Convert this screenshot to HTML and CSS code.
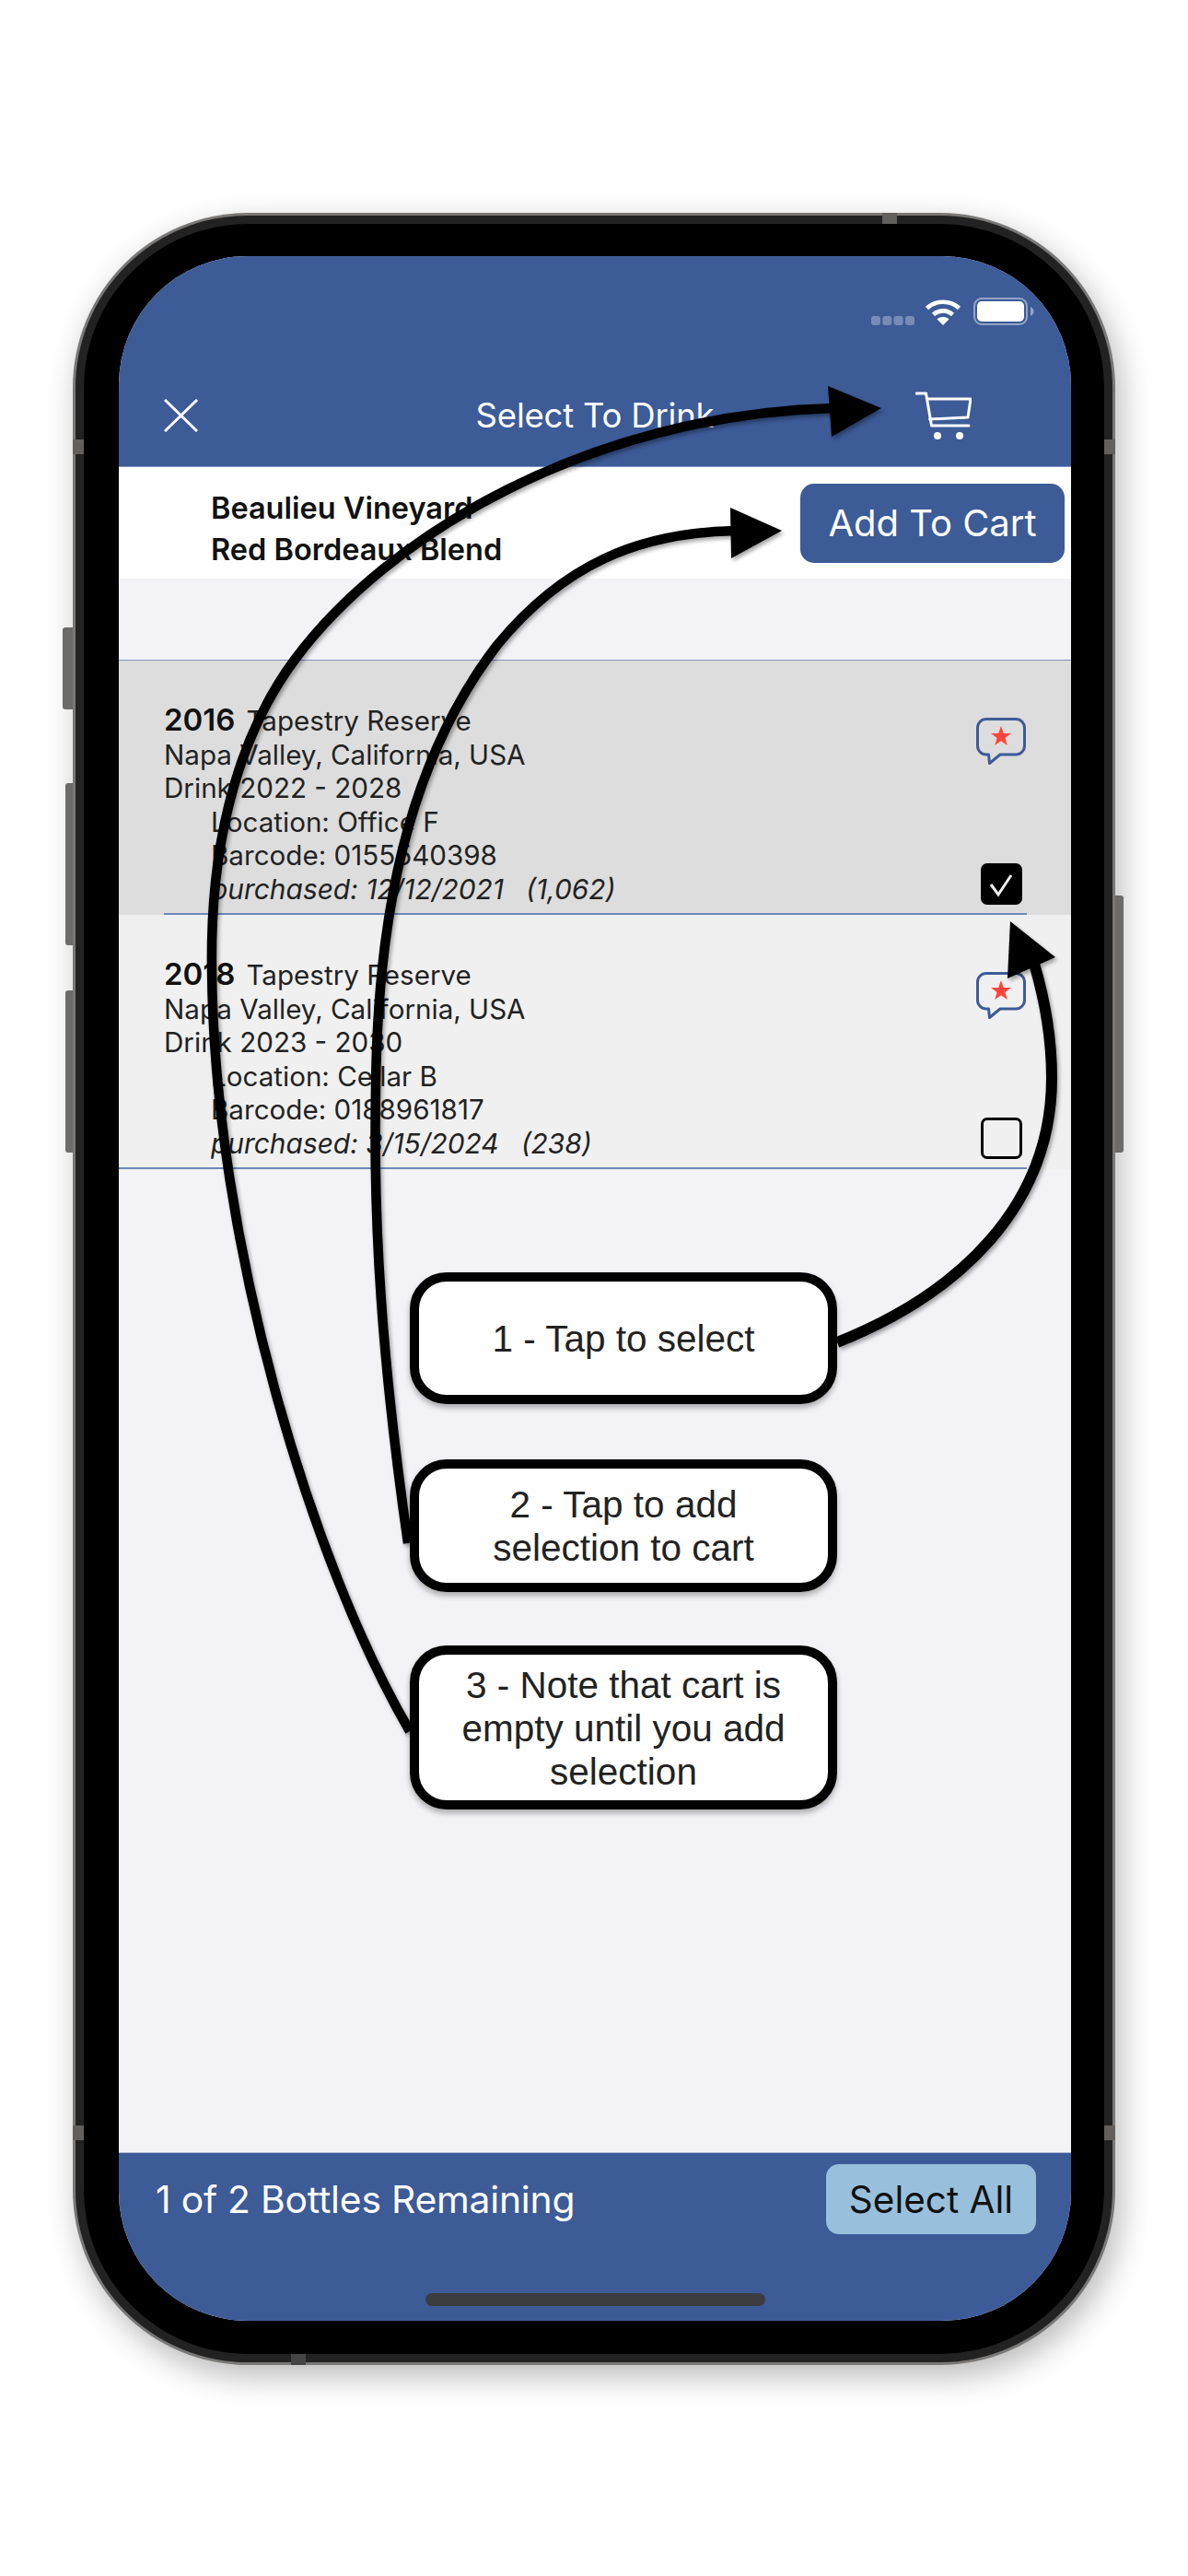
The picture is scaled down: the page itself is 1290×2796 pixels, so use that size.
FILE: index.html
```html
<!DOCTYPE html>
<html lang="en">
<head>
<meta charset="utf-8">
<title>Select To Drink</title>
<link rel="stylesheet" href="styles.css">
</head>
<body>
<div class="page">
  <div class="phone">
    <span class="hw hw-mute"></span>
    <span class="hw hw-volup"></span>
    <span class="hw hw-voldown"></span>
    <span class="hw hw-power"></span>
    <span class="band band-l1"></span>
    <span class="band band-r1"></span>
    <span class="band band-l2"></span>
    <span class="band band-r2"></span>
    <span class="band band-t"></span>
    <span class="band band-b"></span>
    <div class="ring">
      <div class="bezel">
        <div class="screen">
          <header class="header">
            <div class="status">
              <svg class="dots" width="47" height="10" viewBox="0 0 47 10"><g fill="#fff" fill-opacity=".3"><rect width="10" height="10" rx="3"/><rect x="12.3" width="10" height="10" rx="3"/><rect x="24.6" width="10" height="10" rx="3"/><rect x="37" width="10" height="10" rx="3"/></g></svg>
              <svg class="wifi" width="40" height="30" viewBox="0 0 40 30"><g fill="none" stroke="#fff" stroke-width="4.6"><path d="M2.5 11.5C12 2.5 28 2.5 37.500 11.500"/><path d="M9.500 18.500C15.500 13 24.500 13 30.500 18.500"/></g><path fill="#fff" d="M20 30l-6.500-6.500c3.800-3.200 9.200-3.200 13 0z"/></svg>
              <svg class="battery" width="66" height="30" viewBox="0 0 66 30"><rect x="1" y="1" width="57" height="28" rx="8" fill="none" stroke="#fff" stroke-opacity=".45" stroke-width="2"/><rect x="4" y="4" width="51" height="22" rx="5" fill="#fff"/><path d="M62 10c2.500 1 3.500 3 3.500 5s-1 4-3.500 5z" fill="#fff" fill-opacity=".45"/></svg>
            </div>
            <div class="nav">
              <svg class="close" width="37" height="36" viewBox="0 0 37 36"><path d="M1 1l35 34M36 1L1 35" stroke="#fff" stroke-width="3" fill="none"/></svg>
              <div class="title">Select To Drink</div>
              <svg class="cart" width="61" height="52" viewBox="0 0 61 52"><g fill="none" stroke="#fff" stroke-width="3" stroke-linecap="round" stroke-linejoin="round"><path d="M1 2h10.500l6 35H58"/><path d="M12.500 8H60l-3 20-41.500 2"/></g><circle cx="24" cy="48" r="4" fill="#fff"/><circle cx="48" cy="48" r="4" fill="#fff"/></svg>
            </div>
          </header>

          <section class="wine-bar">
            <div class="wine-name">
              <div>Beaulieu Vineyard</div>
              <div>Red Bordeaux Blend</div>
            </div>
            <button class="add-btn">Add To Cart</button>
          </section>

          <main class="content">
            <div class="list">
              <article class="row row-selected">
                <div class="row-inner">
                  <div class="info">
                    <div><b class="year">2016</b><span class="vname">Tapestry Reserve</span></div>
                    <div>Napa Valley, California, USA</div>
                    <div>Drink 2022 - 2028</div>
                    <div class="indent">Location: Office F</div>
                    <div class="indent">Barcode: 0155540398</div>
                    <div class="indent purchased">purchased: 12/12/2021<span class="days">(1,062)</span></div>
                  </div>
                  <div class="side">
                    <svg class="note" width="54" height="52" viewBox="0 0 54 52"><path d="M11 1.500h32a9.500 9.500 0 0 1 9.500 9.500v19.500a9.500 9.500 0 0 1-9.500 9.500H26L14.500 49.500 13.500 40H11a9.500 9.500 0 0 1-9.500-9.500V11A9.500 9.500 0 0 1 11 1.500z" fill="none" stroke="#3d5b97" stroke-width="3" stroke-linejoin="round"/><polygon points="27,9 29.800,17 38,17 31.400,22 33.800,30 27,25.200 20.200,30 22.600,22 16,17 24.200,17" fill="#ff453a"/></svg>
                    <span class="check check-on"><svg width="45" height="45" viewBox="0 0 45 45"><path d="M11 23l8 11 14-21" fill="none" stroke="#eee" stroke-width="3"/></svg></span>
                  </div>
                </div>
              </article>
              <article class="row row-last">
                <div class="row-inner">
                  <div class="info">
                    <div><b class="year">2018</b><span class="vname">Tapestry Reserve</span></div>
                    <div>Napa Valley, California, USA</div>
                    <div>Drink 2023 - 2030</div>
                    <div class="indent">Location: Cellar B</div>
                    <div class="indent">Barcode: 0188961817</div>
                    <div class="indent purchased">purchased: 3/15/2024<span class="days">(238)</span></div>
                  </div>
                  <div class="side">
                    <svg class="note" width="54" height="52" viewBox="0 0 54 52"><path d="M11 1.500h32a9.500 9.500 0 0 1 9.500 9.500v19.500a9.500 9.500 0 0 1-9.500 9.500H26L14.500 49.500 13.500 40H11a9.500 9.500 0 0 1-9.500-9.500V11A9.500 9.500 0 0 1 11 1.500z" fill="none" stroke="#3d5b97" stroke-width="3" stroke-linejoin="round"/><polygon points="27,9 29.800,17 38,17 31.400,22 33.800,30 27,25.200 20.200,30 22.600,22 16,17 24.200,17" fill="#ff453a"/></svg>
                    <span class="check"></span>
                  </div>
                </div>
              </article>
            </div>
          </main>

          <footer class="footer">
            <div class="footer-row">
              <span class="remaining">1 of 2 Bottles Remaining</span>
              <button class="select-all">Select All</button>
            </div>
            <div class="home-bar"></div>
          </footer>
        </div>
      </div>
    </div>
  </div>

  <svg class="arrows" width="1290" height="2796" viewBox="0 0 1290 2796">
    <g fill="none" stroke="#000">
      <path stroke-width="12" d="M909 1457C1040 1405 1142 1310 1142 1170C1142 1130 1136 1090 1123 1046"/>
      <path stroke-width="10.500" d="M443 1675C415 1480 405 1330 408 1180C410 1000 440 830 540 700C610 615 690 578 800 576"/>
      <path stroke-width="10.500" d="M445 1879C340 1700 232 1350 230 1050C228 900 265 790 320 716C420 581 640 450 905 443"/>
    </g>
    <polygon points="1097,1000 1146,1039 1094,1062"/>
    <polygon points="793,551 849,576 794,606"/>
    <polygon points="899,419 957,443 903,474"/>
  </svg>

  <div class="callout callout-1">1 - Tap to select</div>
  <div class="callout callout-2">2 - Tap to add<br>selection to cart</div>
  <div class="callout callout-3">3 - Note that cart is<br>empty until you add<br>selection</div>
</div>
</body>
</html>
```

FILE: styles.css
```css
* { box-sizing: border-box; }
html, body { margin: 0; padding: 0; background: #fff; }
.page {
  position: relative;
  width: 1290px;
  height: 2796px;
  overflow: hidden;
  padding: 231px 0 0 79px;
  font-family: Inter, "Noto Sans", sans-serif;
  color: #111;
}

/* device frame */
.phone {
  position: relative;
  width: 1132px;
  height: 2336px;
  padding: 3px;
  border-radius: 190px;
  background: #7a7876;
  box-shadow: 6px 12px 34px rgba(0,0,0,.28);
}
.ring {
  height: 100%;
  padding: 9px;
  border-radius: 187px;
  background: #232222;
}
.bezel {
  height: 100%;
  padding: 35px 36px 36px 38px;
  border-radius: 178px;
  background: #000;
}
.screen {
  height: 100%;
  display: flex;
  flex-direction: column;
  overflow: hidden;
  border-radius: 140px;
  background: #f2f2f7;
}
.hw { position: absolute; background: #6d6b69; }
.hw-mute { left: -11px; top: 450px; width: 11px; height: 89px; border-radius: 3px 0 0 3px; }
.hw-volup { left: -8px; top: 619px; width: 8px; height: 176px; border-radius: 3px 0 0 3px; }
.hw-voldown { left: -8px; top: 844px; width: 8px; height: 176px; border-radius: 3px 0 0 3px; }
.hw-power { right: -9px; top: 741px; width: 9px; height: 279px; border-radius: 0 3px 3px 0; }
.band { position: absolute; background: #625f5d; z-index: 1; }
.band-l1 { left: 0; top: 246px; width: 12px; height: 16px; }
.band-r1 { right: 0; top: 246px; width: 12px; height: 16px; }
.band-l2 { left: 0; top: 2076px; width: 12px; height: 16px; }
.band-r2 { right: 0; top: 2076px; width: 12px; height: 16px; }
.band-t { left: 879px; top: 0; width: 16px; height: 12px; }
.band-b { left: 237px; bottom: 0; width: 16px; height: 12px; background: #444; }

/* header */
.header {
  flex: none;
  height: 229px;
  background: #3d5b97;
  border-bottom: 1px solid #8197c2;
}
.status {
  display: flex;
  justify-content: flex-end;
  align-items: flex-end;
  height: 75px;
  padding-right: 40px;
}
.dots { margin-right: 11px; }
.wifi { margin-right: 13px; }
.nav {
  display: grid;
  grid-template-columns: 1fr auto 1fr;
  align-items: center;
  height: 153px;
  padding-top: 42px;
}
.close { justify-self: start; margin-left: 49px; }
.cart { justify-self: end; margin-right: 108px; }
.title { color: #fff; font-size: 36.5px; letter-spacing: -.2px; }

/* wine header */
.wine-bar {
  flex: none;
  height: 121px;
  display: flex;
  justify-content: space-between;
  align-items: center;
  padding: 0 7px 0 100px;
  background: #fff;
}
.wine-name { margin-top: 12px; font-size: 32.500px; font-weight: 600; line-height: 45px; color: #111; }
.add-btn {
  width: 287px;
  height: 86px;
  padding: 0;
  border: 0;
  border-radius: 15px;
  background: #3d5b97;
  color: #fff;
  font: 400 40px Inter, sans-serif;
}

/* list */
.content { flex: 1; padding-top: 88px; }
.list { border-top: 1.5px solid #7f94bf; }
.row { height: 276px; padding: 0 48px 0 49px; background: #f0f0f0; }
.row-selected { background: #ddd; }
.row-last { padding-left: 0; }
.row-last .row-inner { padding-left: 49px; }
.row-inner {
  height: 100%;
  display: flex;
  justify-content: space-between;
  padding: 47px 0 0;
  border-bottom: 2px solid #6f88b8;
}
.info { font-size: 29.600px; line-height: 36.6px; color: #222; }
.year { font-size: 33px; font-weight: 600; line-height: 1; color: #111; }
.vname { margin-left: 12px; }
.indent { padding-left: 51px; }
.purchased { font-style: italic; font-size: 29.900px; }
.days { margin-left: 24px; }
.side {
  width: 54px;
  margin: 15px 1px 0 0;
  display: flex;
  flex-direction: column;
  align-items: center;
  justify-content: space-between;
  padding-bottom: 9px;
}
.note { display: block; }
.check {
  display: block;
  width: 45px;
  height: 45px;
  border: 3px solid #000;
  border-radius: 7px;
}
.check-on { border: 0; background: #000; }
.check-on svg { display: block; }

/* footer */
.footer {
  flex: none;
  position: relative;
  height: 183px;
  background: #3d5b97;
  border-top: 1px solid #a9b8d4;
}
.footer-row {
  display: flex;
  justify-content: space-between;
  align-items: center;
  padding: 12px 38px 0 40px;
}
.remaining { color: #fff; font-size: 40.800px; letter-spacing: -.2px; }
.select-all {
  width: 228px;
  height: 76px;
  padding: 0;
  border: 0;
  border-radius: 14px;
  background: #98c0dc;
  color: #111;
  font: 400 40.500px Inter, sans-serif;
}
.home-bar {
  position: absolute;
  left: 333px;
  top: 152px;
  width: 369px;
  height: 14px;
  border-radius: 7px;
  background: #3b3c40;
}

/* tutorial annotations */
.arrows {
  position: absolute;
  left: 0;
  top: 0;
  filter: drop-shadow(2px 3px 2px rgba(0,0,0,.35));
}
.callout {
  position: absolute;
  left: 445px;
  width: 464px;
  display: flex;
  align-items: center;
  justify-content: center;
  text-align: center;
  padding-top: 2px;
  border: 10px solid #000;
  border-radius: 40px;
  background: #fff;
  box-shadow: 0 4px 6px rgba(0,0,0,.3);
  color: #222;
  font-family: "Liberation Sans", Arial, sans-serif;
  font-size: 40.500px;
  line-height: 47px;
}
.callout-1 { top: 1381px; height: 143px; }
.callout-2 { top: 1584px; height: 144px; }
.callout-3 { top: 1786px; height: 178px; }
```
